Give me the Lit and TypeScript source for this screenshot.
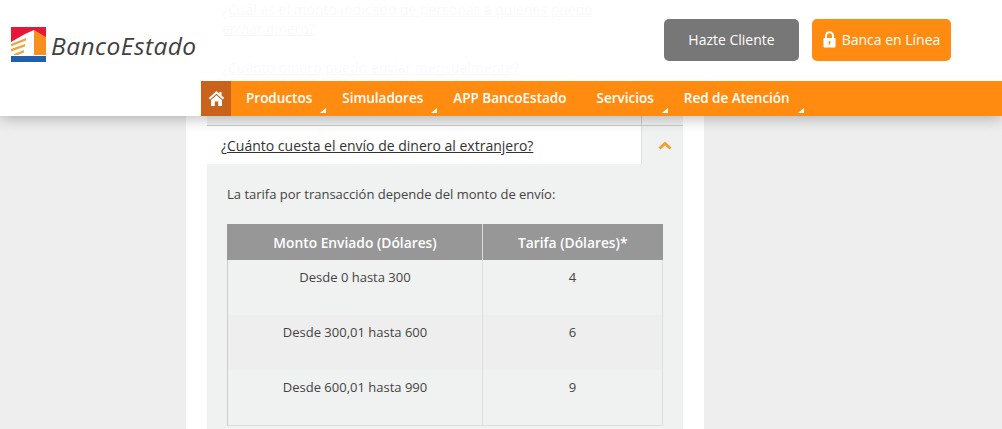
import { LitElement, html, css } from "lit";
import { customElement } from "lit/decorators.js";

@customElement("app-root")
export class AppRoot extends LitElement {
  static styles = css`
    :host { display: block; position: relative; height: 429px; overflow: hidden; background: #eeeeee; font-family: "Open Sans", sans-serif; color: #444; }
    .column { width: 518px; margin-left: 186px; height: 429px; background: #fff; box-sizing: border-box; padding-left: 21px; padding-right: 21px; }
    .faint { height: 100px; padding: 0 15px; box-sizing: border-box; font-size: 14px; line-height: 19px; }
    .faint a { display: block; max-width: 385px; color: #446; text-decoration: underline; }
    .faint a + a { margin-top: 20px; }
    .panel { background: #f0f1f1; height: 329px; }
    .prev { height: 25px; display: flex; justify-content: flex-end; }
    .prev div { width: 42px; border-left: 1px solid #ccc; box-sizing: border-box; }
    .q { display: flex; height: 39px; border-top: 1px solid #ccc; box-sizing: border-box; }
    .q .label { flex: 1; background: #fff; padding: 10px 0 0 14px; box-sizing: border-box; font-size: 14px; line-height: 20px; color: #333; }
    .q .label span { text-decoration: underline; }
    .q .chev { width: 42px; border-left: 1px solid #ddd; box-sizing: border-box; display: flex; align-items: center; justify-content: center; padding-left: 4px; }
    .chev svg { display: block; width: 14px; height: 9px; margin-top: 1px; }
    .body { padding: 20px 20px 0; }
    .body p { margin: 0 0 20px; font-size: 13px; line-height: 20px; color: #444; }
    table { border-collapse: collapse; width: 436px; table-layout: fixed; }
    th { background: #979797; color: #fff; font-size: 13.8px; font-weight: 600; height: 36px; padding: 0; border-left: 1px solid #ddd; }
    th:first-child { border-left: 1px solid #979797; width: 254px; }
    td { height: 55px; box-sizing: border-box; padding: 8px 0 0; vertical-align: top; text-align: center; font-size: 13px; line-height: 18px; color: #444; border-left: 1px solid #ccc; border-right: 1px solid #ddd; }
    tr.alt td { background: #eeeeee; }
    tbody { border-bottom: 1px solid #ddd; }
    .header { position: absolute; left: 0; top: 0; right: 0; height: 116px; background: rgba(255,255,255,.97); box-shadow: 0 2px 14px rgba(0,0,0,.28); display: flex; flex-direction: column; }
    .top { height: 81px; display: flex; align-items: flex-start; justify-content: space-between; }
    .logo { display: flex; align-items: center; margin: 27px 0 0 11px; height: 35px; }
    .logo svg { width: 35px; height: 35px; display: block; }
    .logo span { font-family: "Open Sans", sans-serif; font-style: italic; font-weight: 500; font-size: 24.5px; letter-spacing: 0.45px; color: #3f4040; margin-left: 5px; position: relative; top: 1px; }
    .actions { display: flex; gap: 13px; margin: 19px 51px 0 0; }
    .btn { height: 42px; border-radius: 5px; color: #fff; font-size: 14px; display: flex; align-items: center; justify-content: center; box-sizing: border-box; padding-bottom: 1px; }
    .btn.gray { width: 135px; background: #777777; }
    .btn.orange { width: 139px; background: #ff8c11; gap: 6px; }
    .btn svg { width: 13px; height: 17px; display: block; }
    nav { margin-left: 201px; height: 35px; background: #ff8c11; display: flex; align-items: stretch; }
    .home { width: 30px; background: #c9621a; display: flex; align-items: center; justify-content: center; }
    .home svg { width: 17px; height: 17px; display: block; }
    .item { position: relative; padding: 0 15px; color: #fff; font-size: 13.5px; font-weight: 600; line-height: 35px; }
    .item.has::after { content: ""; position: absolute; right: 0; bottom: 3px; width: 0; height: 0; border-left: 6px solid transparent; border-bottom: 5px solid #fff; margin-right: 1px; }
  `;

  render() {
    const rows = [["Desde 0 hasta 300", "4"], ["Desde 300,01 hasta 600", "6"], ["Desde 600,01 hasta 990", "9"]];
    const items: [string, boolean][] = [["Productos", true], ["Simuladores", true], ["APP BancoEstado", false], ["Servicios", true], ["Red de Atención", true]];
    return html`
      <div class="column">
        <div class="faint">
          <a>¿Cuál es el monto indicado de personas a quienes puedo enviar dinero?</a>
          <a>¿Cuánto dinero puedo enviar mensualmente?</a>
        </div>
        <div class="panel">
          <div class="prev"><div></div></div>
          <div class="q">
            <div class="label">¿<span>Cuánto cuesta el envío de dinero al extranjero?</span></div>
            <div class="chev">
              <svg viewBox="0 0 14 9"><path d="M1.5 7.5 L7 2.5 L12.5 7.5" fill="none" stroke="#f0a030" stroke-width="3"/></svg>
            </div>
          </div>
          <div class="body">
            <p>La tarifa por transacción depende del monto de envío:</p>
            <table>
              <thead><tr><th>Monto Enviado (Dólares)</th><th>Tarifa (Dólares)*</th></tr></thead>
              <tbody>
                ${rows.map((r, i) => html`<tr class=${i === 1 ? "alt" : ""}><td>${r[0]}</td><td>${r[1]}</td></tr>`)}
              </tbody>
            </table>
          </div>
        </div>
      </div>
      <div class="header">
        <div class="top">
          <div class="logo">
            <svg viewBox="0 0 35 35">
              <rect width="35" height="28" fill="#e8173a"/>
              <rect y="29" width="35" height="6" fill="#1f5fae"/>
              <rect y="28" width="35" height="1" fill="#fff"/>
              <path d="M0 15 L14 7 L23 3 L23 28 L0 28 Z" fill="#fff"/>
              <path d="M23 3 L35 10 L35 28 L23 28 Z" fill="#f7901e"/>
              <path d="M0 17 L15 11 L15 13.5 L0 19.5 Z M0 22 L14 17 L14 19.5 L0 24.5 Z M3 27 L13 23 L13 25.5 L7 28 L3 28 Z" fill="#f2a33a"/>
            </svg>
            <span>BancoEstado</span>
          </div>
          <div class="actions">
            <div class="btn gray">Hazte Cliente</div>
            <div class="btn orange">
              <svg viewBox="0 0 13 17"><path d="M3 7 V4.8 a3.5 3.5 0 0 1 7 0 V7" fill="none" stroke="#fff" stroke-width="2"/><rect x="0.5" y="7" width="12" height="9.5" rx="1" fill="#fff"/><rect x="5.7" y="10" width="1.6" height="3.5" fill="#ff8c11"/></svg>
              Banca en Línea
            </div>
          </div>
        </div>
        <nav>
          <div class="home">
            <svg viewBox="0 0 17 17"><path d="M8.5 1 L0.8 8 L2.2 9.4 L8.5 3.7 L14.8 9.4 L16.2 8 L13.5 5.6 V2 H11.5 V3.8 Z" fill="#fff"/><path d="M3 10 L8.5 5.2 L14 10 V16 H10.2 V11.5 H6.8 V16 H3 Z" fill="#fff"/></svg>
          </div>
          ${items.map(([t, has]) => html`<div class="item ${has ? "has" : ""}">${t}</div>`)}
        </nav>
      </div>
    `;
  }
}
